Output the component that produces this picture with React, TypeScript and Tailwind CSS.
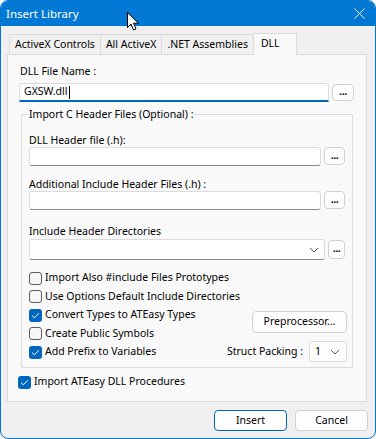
import React from 'react';

const font = { fontFamily: '"Noto Sans", "Open Sans", sans-serif' };

const Dots = ({ className = '' }: { className?: string }) => (
  <button className={`flex items-center justify-center rounded-[4px] border border-[#d0d0d0] bg-[#fdfdfd] text-[11px] font-bold leading-none text-[#1a1a1a] ${className}`}>
    <span className="-mt-[4px] tracking-[-0.5px]">...</span>
  </button>
);

const Chevron = () => (
  <svg width="10" height="6" viewBox="0 0 10 6" className="text-[#555]">
    <path d="M1 1 L5 5 L9 1" fill="none" stroke="currentColor" strokeWidth="1" />
  </svg>
);

const Box = ({ checked }: { checked?: boolean }) =>
  checked ? (
    <span className="flex h-[13px] w-[13px] shrink-0 items-center justify-center rounded-[3px] bg-[#0067c0]">
      <svg width="9" height="7" viewBox="0 0 9 7">
        <path d="M1 3.6 L3.3 5.8 L8 1.2" fill="none" stroke="#fff" strokeWidth="1" />
      </svg>
    </span>
  ) : (
    <span className="h-[13px] w-[13px] shrink-0 rounded-[3px] border border-[#5c5c5c] bg-[#f6f6f6]" />
  );

const Check = ({ checked, label }: { checked?: boolean; label: string }) => (
  <div className="flex h-[18.5px] items-center whitespace-nowrap">
    <Box checked={checked} />
    <span className="ml-[3px]">{label}</span>
  </div>
);

const Field = ({ className = '' }: { className?: string }) => (
  <div className={`h-[19px] rounded-[3px] border border-[#dcdcdc] border-b-[#8b8b8b] bg-white ${className}`} />
);

export default function App() {
  const tabs = ['ActiveX Controls', 'All ActiveX', '.NET Assemblies'];
  return (
    <div
      style={font}
      className="relative flex h-[439px] w-[376px] flex-col overflow-hidden rounded-[8px] border border-[#0078d4] bg-[#f0f0f0] text-[10.5px] text-black"
    >
      {/* title bar */}
      <div className="flex h-[25px] shrink-0 items-center justify-between bg-[#0078d4] pl-[5px] pr-[10px] text-white">
        <span className="text-[11.5px]">Insert Library</span>
        <svg width="11" height="11" viewBox="0 0 11 11">
          <path d="M0.5 0.5 L10.5 10.5 M10.5 0.5 L0.5 10.5" stroke="#fff" strokeWidth="1" />
        </svg>
      </div>

      {/* cursor */}
      <svg className="absolute left-[126px] top-[11px]" width="13" height="20" viewBox="0 0 13 20">
        <path d="M0.5 0.5 L0.5 15.5 L4 12 L6.5 18 L9 17 L6.6 11.2 L11.5 11.2 Z" fill="#fff" stroke="#000" strokeWidth="1" strokeLinejoin="round" />
      </svg>

      <div className="flex flex-col px-[6px]">
        {/* tabs */}
        <div className="relative z-10 mt-[8px] flex pl-[2px]">
          {tabs.map((t) => (
            <div
              key={t}
              className="flex h-[20px] items-center border border-b-0 border-l-[#dadada] border-r-0 border-t-[#dadada] bg-[#f0f0f0] px-[5px] first:border-l"
            >
              {t}
            </div>
          ))}
          <div className="-mt-[1px] mb-[-1px] flex h-[22px] w-[44px] items-start border border-b-0 border-[#dadada] bg-[#f9f9f9] pl-[7px] pt-[2px]">
            DLL
          </div>
        </div>

        {/* tab panel */}
        <div className="flex h-[348px] w-[360px] flex-col border border-[#dadada] bg-[#f9f9f9] pl-[11px] pr-[11px]">
          <div className="ml-[1px] mt-[8px] leading-[16px]">DLL File Name :</div>
          <div className="mt-[4px] flex items-start">
            <div className="flex h-[19px] w-[310px] items-center rounded-t-[3px] border border-b-2 border-[#dcdcdc] border-b-[#0067c0] bg-white pl-[4px]">
              GXSW.dll<span className="ml-[1px] inline-block h-[13px] w-[1px] bg-black" />
            </div>
            <Dots className="ml-[3px] mt-[1px] h-[17px] w-[22px]" />
          </div>

          <fieldset className="mt-[4px] ml-[2px] mr-[2px] h-[262px] min-w-0 border border-[#dcdcdc] pl-[7px] pr-[7px]">
            <legend className="leading-[16px]">Import C Header Files (Optional) :</legend>

            <div className="mt-[11px] leading-[14px]">DLL Header file (.h):</div>
            <div className="flex items-start">
              <Field className="w-[294px]" />
              <Dots className="ml-[3px] h-[18px] w-[21px]" />
            </div>

            <div className="mt-[11px] leading-[14px]">Additional Include Header Files (.h) :</div>
            <div className="flex items-start">
              <Field className="w-[294px]" />
              <Dots className="ml-[3px] h-[18px] w-[21px]" />
            </div>

            <div className="mt-[14px] leading-[14px]">Include Header Directories</div>
            <div className="mt-[1px] flex items-start">
              <div className="flex h-[21px] w-[299px] items-center justify-end rounded-[3px] border border-[#dcdcdc] border-b-[#8b8b8b] bg-white pr-[5px]">
                <Chevron />
              </div>
              <Dots className="ml-[3px] mt-[1px] h-[19px] w-[17px]" />
            </div>

            <div className="mt-[9px] flex w-[318px]">
              <div className="flex w-0 min-w-0 flex-1 flex-col">
                <Check label="Import Also #include Files Prototypes" />
                <Check label="Use Options Default Include Directories" />
                <Check checked label="Convert Types to ATEasy Types" />
                <Check label="Create Public Symbols" />
                <Check checked label="Add Prefix to Variables" />
              </div>
              <div className="flex shrink-0 flex-col items-end pt-[42px]">
                <button className="h-[22px] w-[95px] rounded-[4px] border border-[#d0d0d0] bg-[#fdfdfd]">Preprocessor...</button>
                <div className="mt-[8px] flex items-center whitespace-nowrap">
                  <span className="mr-[6px]">Struct Packing :</span>
                  <div className="flex h-[21px] w-[38px] items-center justify-between rounded-[3px] border border-[#dcdcdc] bg-[#fdfdfd] pl-[5px] pr-[6px]">
                    <span>1</span>
                    <Chevron />
                  </div>
                </div>
              </div>
            </div>
          </fieldset>

          <div className="mt-[5px] -ml-[1px] flex h-[18px] items-center">
            <Box checked />
            <span className="ml-[3px]">Import ATEasy DLL Procedures</span>
          </div>
        </div>

        {/* footer */}
        <div className="mt-[8px] flex justify-end gap-[8px] pr-[1px]">
          <button className="h-[21px] w-[73px] rounded-[4px] border border-[#0067c0] bg-[#fdfdfd]">Insert</button>
          <button className="h-[21px] w-[73px] rounded-[4px] border border-[#d0d0d0] bg-[#fdfdfd]">Cancel</button>
        </div>
      </div>
    </div>
  );
}
